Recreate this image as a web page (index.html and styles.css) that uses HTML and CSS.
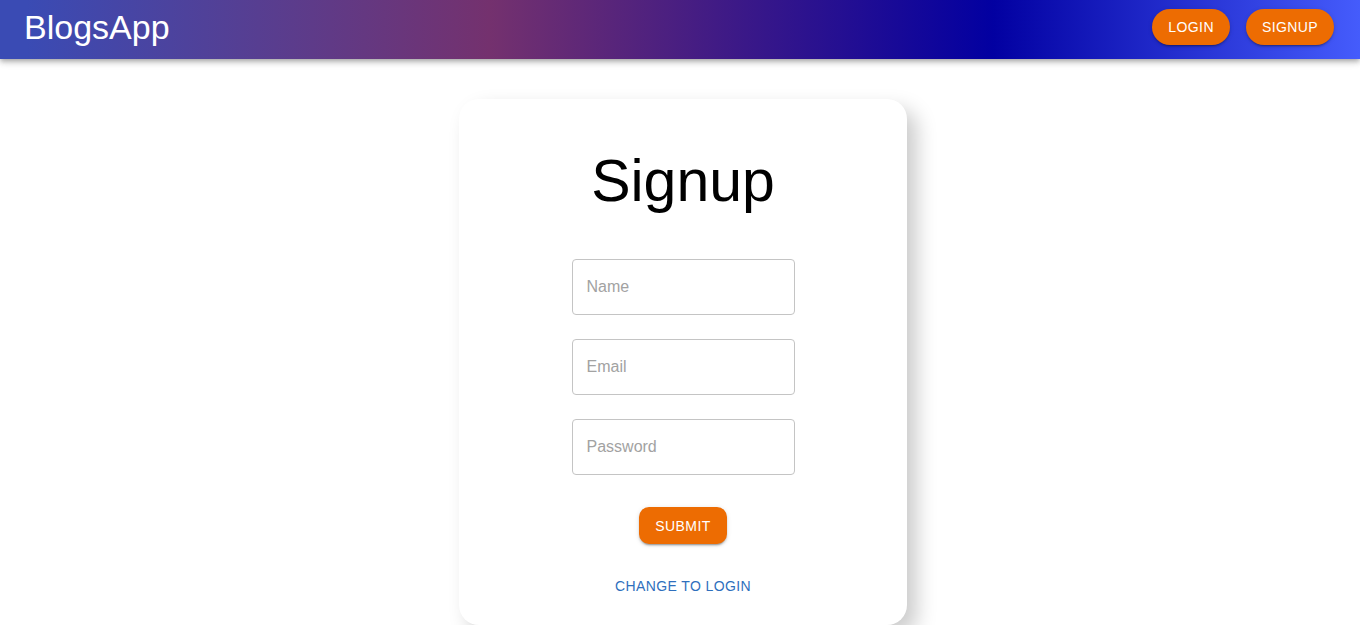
FILE: index.html
```html
<!DOCTYPE html>
<html lang="en">
<head>
<meta charset="utf-8">
<title>BlogsApp</title>
<link rel="stylesheet" href="styles.css">
</head>
<body>
<header class="appbar">
  <div class="brand">BlogsApp</div>
  <nav class="nav">
    <button class="pill-btn">LOGIN</button>
    <button class="pill-btn">SIGNUP</button>
  </nav>
</header>
<main class="page">
  <form class="card" onsubmit="return false">
    <h2 class="title">Signup</h2>
    <div class="fields">
      <input class="field" type="text" placeholder="Name">
      <input class="field" type="email" placeholder="Email">
      <input class="field" type="password" placeholder="Password">
    </div>
    <button class="submit-btn" type="submit">SUBMIT</button>
    <button class="link-btn" type="button">CHANGE TO LOGIN</button>
  </form>
</main>
</body>
</html>
```
FILE: styles.css
```css
* { box-sizing: border-box; }
html, body { margin: 0; padding: 0; background: #fff; }
body {
  font-family: "Liberation Sans", Arial, sans-serif;
  color: #000;
  overflow: hidden;
}
.appbar {
  height: 59px;
  display: flex;
  align-items: flex-start;
  justify-content: space-between;
  padding: 0 26px 0 24px;
  background: linear-gradient(90deg, rgba(58,75,180,1) 2%, rgba(116,49,110,1) 36%, rgba(2,0,161,1) 73%, rgba(69,92,252,1) 100%);
  box-shadow: 0px 2px 4px -1px rgba(0,0,0,0.2), 0px 4px 5px 0px rgba(0,0,0,0.14), 0px 1px 10px 0px rgba(0,0,0,0.12);
  position: relative;
  z-index: 1;
}
.brand {
  color: #fff;
  font-size: 34px;
  line-height: 52px;
  padding-top: 1px;
}
.nav {
  display: flex;
  gap: 16px;
  padding-top: 9px;
}
.pill-btn {
  font-family: inherit;
  font-size: 14px;
  font-weight: 500;
  letter-spacing: 0.4px;
  color: #fff;
  background: #ed6c02;
  border: none;
  border-radius: 18px;
  height: 36px;
  padding: 0 16px;
  box-shadow: 0px 3px 1px -2px rgba(0,0,0,0.2), 0px 2px 2px 0px rgba(0,0,0,0.14), 0px 1px 5px 0px rgba(0,0,0,0.12);
  cursor: pointer;
}
.page {
  display: flex;
  justify-content: center;
  padding: 40px 0 0 6px;
}
.card {
  width: 448px;
  display: flex;
  flex-direction: column;
  align-items: center;
  padding: 48px 24px 21px;
  background: #fff;
  border-radius: 20px;
  box-shadow: 10px 10px 20px #ccc;
}
.title {
  margin: 0;
  font-size: 59px;
  font-weight: 400;
  line-height: 69px;
}
.fields {
  display: flex;
  flex-direction: column;
  gap: 24px;
  margin-top: 43px;
}
.field {
  width: 223px;
  height: 56px;
  border: 1px solid #c4c4c4;
  border-radius: 4px;
  padding: 0 14px;
  font-family: inherit;
  font-size: 16px;
  color: #000;
  outline: none;
}
.field::placeholder { color: #a2a2a2; }
.submit-btn {
  margin-top: 32px;
  font-family: inherit;
  font-size: 14px;
  font-weight: 500;
  letter-spacing: 0.4px;
  color: #fff;
  background: #ed6c02;
  border: none;
  border-radius: 10px;
  width: 88px;
  height: 37px;
  padding: 0;
  box-shadow: 0px 3px 1px -2px rgba(0,0,0,0.2), 0px 2px 2px 0px rgba(0,0,0,0.14), 0px 1px 5px 0px rgba(0,0,0,0.12);
  cursor: pointer;
}
.link-btn {
  margin-top: 24px;
  font-family: inherit;
  font-size: 14px;
  letter-spacing: 0.4px;
  color: #2f6fbd;
  background: transparent;
  border: none;
  height: 36px;
  padding: 0 8px;
  cursor: pointer;
}
```
